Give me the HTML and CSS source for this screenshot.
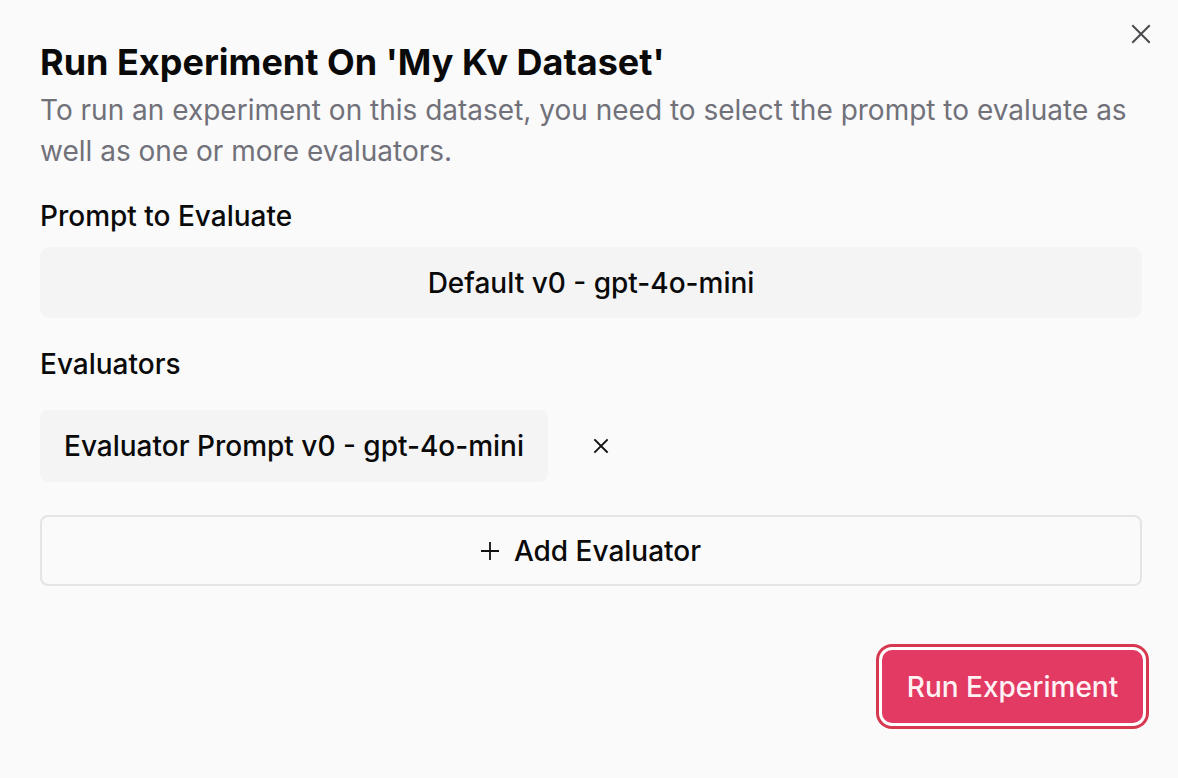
FILE: index.html
```html
<!DOCTYPE html>
<html>
<head>
<meta charset="utf-8">
<link rel="stylesheet" href="styles.css">
</head>
<body>
<div class="dialog">
  <button class="close" aria-label="Close">
    <svg width="20" height="20" viewBox="0 0 20 20"><path d="M2 2L18 18M18 2L2 18" stroke="#4a4a4f" stroke-width="2" stroke-linecap="square"/></svg>
  </button>
  <h1 class="title">Run Experiment On 'My Kv Dataset'</h1>
  <p class="desc">To run an experiment on this dataset, you need to select the prompt to evaluate as well as one or more evaluators.</p>

  <div class="label label-first">Prompt to Evaluate</div>
  <div class="select">Default v0 - gpt-4o-mini</div>

  <div class="label label-second">Evaluators</div>
  <div class="eval-row">
    <div class="chip">Evaluator Prompt v0 - gpt-4o-mini</div>
    <button class="remove" aria-label="Remove">
      <svg width="16" height="16" viewBox="0 0 16 16"><path d="M2 2L14 14M14 2L2 14" stroke="#111" stroke-width="1.8" stroke-linecap="square"/></svg>
    </button>
  </div>

  <button class="add">
    <svg width="18" height="18" viewBox="0 0 18 18"><path d="M9 0V18M0 9H18" stroke="#111" stroke-width="1.8"/></svg>
    <span>Add Evaluator</span>
  </button>

  <div class="footer">
    <button class="run">Run Experiment</button>
  </div>
</div>
</body>
</html>
```

FILE: styles.css
```css
* { box-sizing: border-box; }
html, body {
  margin: 0;
  padding: 0;
  background: #fafafa;
  font-family: Inter, "Noto Sans", sans-serif;
  color: #0a0a0b;
}
.dialog {
  position: relative;
  width: 1178px;
  height: 778px;
  padding: 42px 36px 0 40px;
}
.close {
  position: absolute;
  top: 24px;
  right: 27px;
  width: 20px;
  height: 20px;
  padding: 0;
  border: 0;
  background: none;
  display: flex;
}
.title {
  margin: 0;
  font-size: 36px;
  line-height: 40px;
  font-weight: 700;
}
.desc {
  margin: 8px 0 0;
  font-size: 28px;
  line-height: 41px;
  color: #71717a;
  font-weight: 400;
  width: 1102px;
}
.label {
  font-size: 28px;
  line-height: 40px;
  font-weight: 500;
}
.label-first { margin-top: 24px; }
.label-second { margin-top: 26px; }
.select {
  margin-top: 11px;
  width: 1102px;
  height: 71px;
  background: #f4f4f5;
  border-radius: 10px;
  display: flex;
  align-items: center;
  justify-content: center;
  font-size: 28px;
  font-weight: 500;
}
.eval-row {
  margin-top: 26px;
  display: flex;
  align-items: center;
  gap: 45px;
}
.chip {
  height: 72px;
  padding: 0 24px;
  background: #f4f4f5;
  border-radius: 8px;
  display: flex;
  align-items: center;
  font-size: 28px;
  font-weight: 500;
}
.remove {
  border: 0;
  background: none;
  padding: 0;
  display: flex;
}
.add {
  margin-top: 33px;
  width: 1102px;
  height: 71px;
  border: 2px solid #e4e4e7;
  border-radius: 8px;
  background: #fafafa;
  display: flex;
  align-items: center;
  justify-content: center;
  gap: 15px;
  font-family: inherit;
  font-size: 28px;
  font-weight: 500;
  color: #0a0a0b;
  padding: 0;
}
.footer {
  display: flex;
  justify-content: flex-end;
  width: 1103px;
  margin-top: 64px;
}
.run {
  width: 261px;
  height: 73px;
  border: 0;
  border-radius: 10px;
  background: #e23a63;
  color: #fff1f4;
  font-family: inherit;
  font-size: 28px;
  font-weight: 500;
  box-shadow: 0 0 0 3px #ffffff, 0 0 0 6px #d6384f;
}
```
